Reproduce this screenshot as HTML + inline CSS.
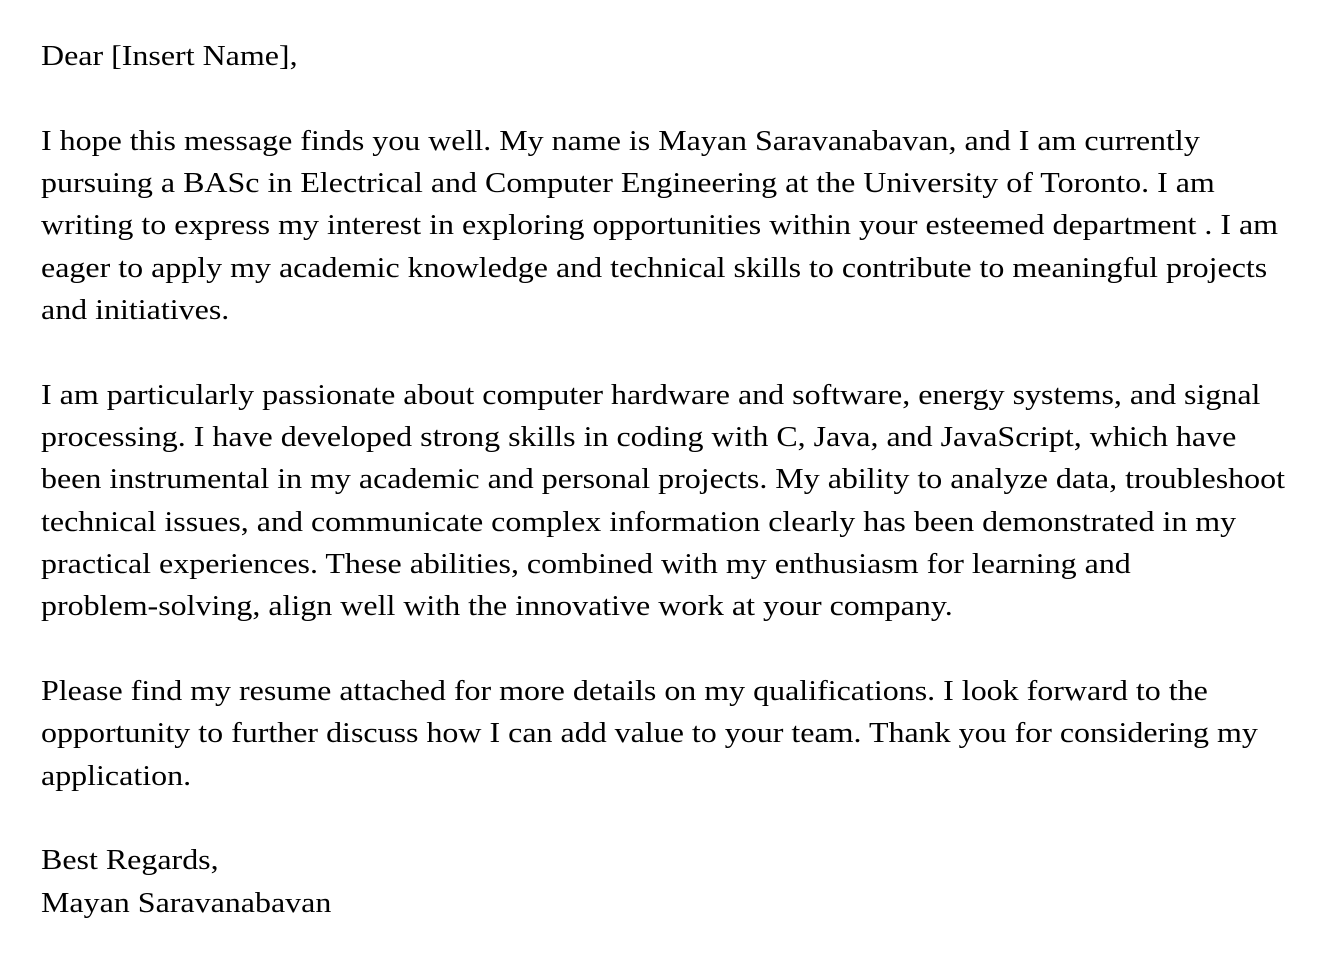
<!DOCTYPE html>
<html>
<head>
<meta charset="utf-8">
<style>
html,body{margin:0;padding:0;background:#fff;}
body{width:1344px;height:964px;overflow:hidden;position:relative;}
.t{position:absolute;left:41px;top:36px;font-family:"Liberation Serif",serif;font-size:28px;line-height:42.33px;color:#000;white-space:nowrap;transform:scaleX(1.142);transform-origin:0 0;}
</style>
</head>
<body>
<div class="t">Dear [Insert Name],<br><br>I hope this message finds you well. My name is Mayan Saravanabavan, and I am currently<br>pursuing a BASc in Electrical and Computer Engineering at the University of Toronto. I am<br>writing to express my interest in exploring opportunities within your esteemed department . I am<br>eager to apply my academic knowledge and technical skills to contribute to meaningful projects<br>and initiatives.<br><br>I am particularly passionate about computer hardware and software, energy systems, and signal<br>processing. I have developed strong skills in coding with C, Java, and JavaScript, which have<br>been instrumental in my academic and personal projects. My ability to analyze data, troubleshoot<br>technical issues, and communicate complex information clearly has been demonstrated in my<br>practical experiences. These abilities, combined with my enthusiasm for learning and<br>problem-solving, align well with the innovative work at your company.<br><br>Please find my resume attached for more details on my qualifications. I look forward to the<br>opportunity to further discuss how I can add value to your team. Thank you for considering my<br>application.<br><br>Best Regards,<br>Mayan Saravanabavan</div>
</body>
</html>
